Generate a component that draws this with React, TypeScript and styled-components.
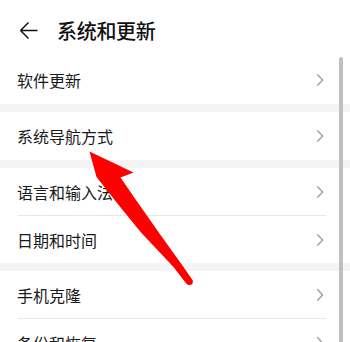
import React from "react";
import styled, { createGlobalStyle } from "styled-components";

const Global = createGlobalStyle`
  html, body { margin: 0; padding: 0; background: #ffffff; }
  body { font-family: "Noto Sans CJK SC", "Noto Sans", sans-serif; }
`;

const Page = styled.div`
  position: relative;
  width: 350px;
  height: 342px;
  overflow: hidden;
  background: #ffffff;
`;

const Header = styled.header`
  box-sizing: border-box;
  height: 56px;
  padding: 4px 0 0 19px;
  display: flex;
  align-items: center;
  gap: 18px;
`;

const BackButton = styled.span`
  display: flex;
  width: 20px;
  height: 20px;
  color: #111111;
`;

const Title = styled.h1`
  margin: 0;
  font-size: 20px;
  font-weight: 500;
  color: #111111;
  letter-spacing: -0.3px;
`;

const Section = styled.section`
  display: flex;
  flex-direction: column;
`;

const Band = styled.div`
  height: 8px;
  background: #f4f4f4;
`;

const Row = styled.div<{ $h: number }>`
  box-sizing: border-box;
  height: ${(p) => p.$h}px;
  padding: 0 26px 0 17px;
  display: flex;
  align-items: center;
  justify-content: space-between;
  font-size: 16px;
  color: #1a1a1a;
`;

const Label = styled.span`
  line-height: 1;
`;

const Chevron = styled.svg`
  width: 8px;
  height: 14px;
  color: #9c9c9c;
`;

const Divider = styled.div`
  height: 1px;
  margin: 0 24px 0 18px;
  background: #e7e7e7;
`;

const ScrollBar = styled.div`
  position: absolute;
  top: 57px;
  right: 7px;
  bottom: 0;
  width: 4px;
  border-radius: 2px 2px 0 0;
  background: #bfbfbf;
`;

const Overlay = styled.svg`
  position: absolute;
  left: 0;
  top: 0;
  width: 350px;
  height: 342px;
  pointer-events: none;
`;

const ChevronIcon = () => (
  <Chevron viewBox="0 0 8 14" fill="none">
    <path d="M1.3 1.3 L6.6 7 L1.3 12.7" stroke="currentColor" strokeWidth="1.3" />
  </Chevron>
);

type Item = { label: string; h: number };

const sections: Item[][] = [
  [{ label: "软件更新", h: 48 }],
  [{ label: "系统导航方式", h: 48 }],
  [
    { label: "语言和输入法", h: 47 },
    { label: "日期和时间", h: 47 },
  ],
  [
    { label: "手机克隆", h: 47 },
    { label: "备份和恢复", h: 47 },
  ],
];

export default function App() {
  return (
    <Page>
      <Global />
      <Header>
        <BackButton>
          <svg width="20" height="20" viewBox="0 0 20 20" fill="none">
            <path d="M1.5 10.5 H18.5 M1.5 10.5 L9.5 2.5 M1.5 10.5 L9.5 18.5" stroke="currentColor" strokeWidth="1.5" />
          </svg>
        </BackButton>
        <Title>系统和更新</Title>
      </Header>
      {sections.map((items, si) => (
        <React.Fragment key={si}>
          {si > 0 && <Band />}
          <Section>
            {items.map((it, i) => (
              <React.Fragment key={it.label}>
                {i > 0 && <Divider />}
                <Row $h={it.h}>
                  <Label>{it.label}</Label>
                  <ChevronIcon />
                </Row>
              </React.Fragment>
            ))}
          </Section>
        </React.Fragment>
      ))}
      <ScrollBar />
      <Overlay viewBox="0 0 350 342">
        <path
          d="M89.5 151.5 L133.5 172.5 L120.5 177.5 L136 200 L159.3 233.3 L183.3 266.7 L192.8 280.5 Q193.5 285.5 188.5 285 Q186.8 284.6 186 283.3 L173.3 266.7 L141.7 233.3 L120 206.7 L96.5 177 Z"
          fill="#ff0000"
        />
      </Overlay>
    </Page>
  );
}
